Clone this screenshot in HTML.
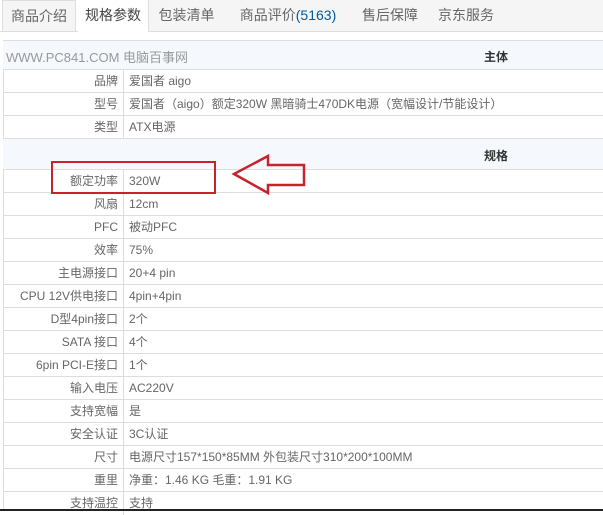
<!DOCTYPE html>
<html><head><style>
body{margin:0;width:603px;height:511px;overflow:hidden;background:#fff;font-family:"Liberation Sans","Noto Sans CJK SC",sans-serif;font-size:12px;color:#666;position:relative}
.tab{position:absolute;top:0;height:31px;line-height:31px;font-size:14px;color:#666;text-align:center;background:#f5f5f5}
.r{position:absolute;left:3px;width:600px;height:23px;line-height:23px;border-top:1px solid #ddd;box-sizing:border-box;white-space:nowrap}
.r .l{position:absolute;left:0;width:115px;text-align:right;top:0}
.r .v{position:absolute;left:126px;top:0}
.r:before{content:"";position:absolute;left:120px;top:0;height:23px;border-left:1px solid #ddd}
.h{position:absolute;left:3px;width:600px;background:#f5f9fd;border-top:1px solid #ddd;box-sizing:border-box}
</style></head><body>
<div style="position:absolute;left:0;top:31px;width:603px;border-top:1px solid #ddd"></div>
<div class="tab" style="left:2px;width:74px;border:1px solid #ddd;border-bottom:none;box-sizing:border-box">商品介绍</div>
<div class="tab" style="left:78px;width:70px;background:#fff;height:32px;line-height:30px;color:#444">规格参数</div>
<div class="tab" style="left:148px;width:76px;border-left:1px solid #ddd;box-sizing:border-box">包装清单</div>
<div class="tab" style="left:224px;width:128px">商品评价<span style="color:#005aa0">(5163)</span></div>
<div class="tab" style="left:352px;width:76px">售后保障</div>
<div class="tab" style="left:428px;width:76px">京东服务</div>
<div class="tab" style="left:504px;width:99px"></div>
<div style="position:absolute;left:3px;top:40px;height:471px;border-left:1px solid #ddd"></div>
<div class="h" style="top:40px;height:29px"><span style="position:absolute;left:3px;top:6px;font-size:13px;color:#999">WWW.PC841.COM 电脑百事网</span><b style="position:absolute;left:481px;top:7px;color:#333">主体</b></div>
<div class="r" style="top:69px"><span class="l">品牌</span><span class="v">爱国者 aigo</span></div>
<div class="r" style="top:92px"><span class="l">型号</span><span class="v">爱国者（aigo）额定320W 黑暗骑士470DK电源（宽幅设计/节能设计）</span></div>
<div class="r" style="top:115px"><span class="l">类型</span><span class="v">ATX电源</span></div>
<div class="h" style="top:138px;height:31px"><b style="position:absolute;left:481px;top:8px;color:#333">规格</b></div>
<div class="r" style="top:169px"><span class="l">额定功率</span><span class="v">320W</span></div>
<div class="r" style="top:192px"><span class="l">风扇</span><span class="v">12cm</span></div>
<div class="r" style="top:215px"><span class="l">PFC</span><span class="v">被动PFC</span></div>
<div class="r" style="top:238px"><span class="l">效率</span><span class="v">75%</span></div>
<div class="r" style="top:261px"><span class="l">主电源接口</span><span class="v">20+4 pin</span></div>
<div class="r" style="top:284px"><span class="l">CPU 12V供电接口</span><span class="v">4pin+4pin</span></div>
<div class="r" style="top:307px"><span class="l">D型4pin接口</span><span class="v">2个</span></div>
<div class="r" style="top:330px"><span class="l">SATA 接口</span><span class="v">4个</span></div>
<div class="r" style="top:353px"><span class="l">6pin PCI-E接口</span><span class="v">1个</span></div>
<div class="r" style="top:376px"><span class="l">输入电压</span><span class="v">AC220V</span></div>
<div class="r" style="top:399px"><span class="l">支持宽幅</span><span class="v">是</span></div>
<div class="r" style="top:422px"><span class="l">安全认证</span><span class="v">3C认证</span></div>
<div class="r" style="top:445px"><span class="l">尺寸</span><span class="v">电源尺寸157*150*85MM 外包装尺寸310*200*100MM</span></div>
<div class="r" style="top:468px"><span class="l">重里</span><span class="v">净重：1.46 KG 毛重：1.91 KG</span></div>
<div class="r" style="top:491px"><span class="l">支持温控</span><span class="v">支持</span></div>
<div style="position:absolute;left:0;top:509px;width:603px;height:2px;background:#222"></div>
<div style="position:absolute;left:51px;top:161px;width:161px;height:29px;border:2px solid #c8232c"></div>
<svg style="position:absolute;left:0;top:0" width="603" height="511"><polygon points="234,174 268,156 268,165 304,165 304,185 268,185 268,193" fill="none" stroke="#c8232c" stroke-width="2.5"/></svg>
</body></html>
